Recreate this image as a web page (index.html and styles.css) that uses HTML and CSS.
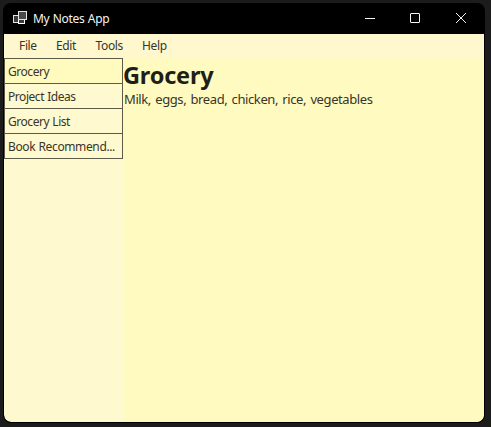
FILE: index.html
```html
<!DOCTYPE html>
<html lang="en">
<head>
<meta charset="utf-8">
<title>My Notes App</title>
<link rel="stylesheet" href="styles.css">
</head>
<body>
<main class="window">
  <header class="titlebar">
    <svg class="app-icon" width="16" height="17" viewBox="0 0 16 17">
      <rect x="1.5" y="5.5" width="6" height="7" fill="#3a3a3a" stroke="#e4e4e4"/>
      <rect x="6.5" y="9.5" width="6" height="4" fill="#3a3a3a" stroke="#fff"/>
      <rect x="6.5" y="1.5" width="8" height="8" fill="#484848" stroke="#e4e4e4"/>
    </svg>
    <h1 class="title">My Notes App</h1>
    <div class="controls">
      <button class="control" aria-label="Minimize"><svg width="13" height="13"><path d="M1 6.5H11"/></svg></button>
      <button class="control" aria-label="Maximize"><svg width="13" height="13"><rect x="1.5" y="1.5" width="9" height="9" rx=".5"/></svg></button>
      <button class="control close" aria-label="Close"><svg width="12" height="13"><path d="M1 1L11 11M11 1L1 11"/></svg></button>
    </div>
  </header>
  <nav class="menu"><span class="file">File</span><span class="edit">Edit</span><span class="tools">Tools</span><span>Help</span></nav>
  <div class="body">
    <ul class="notes">
      <li class="note selected">Grocery</li>
      <li class="note">Project Ideas</li>
      <li class="note">Grocery List</li>
      <li class="note long">Book Recommend...</li>
    </ul>
    <article class="content">
      <h2 class="heading">Grocery</h2>
      <p class="text">Milk, eggs, bread, chicken, rice, vegetables</p>
    </article>
  </div>
</main>
</body>
</html>
```
FILE: styles.css
```css
* { box-sizing: border-box; }
body {
  margin: 0;
  height: 427px;
  padding: 3px 6px 4px 3px;
  overflow: hidden;
  background: #1c1c1c;
  font: 12px/16px "Noto Sans", "Open Sans", sans-serif;
  color: #38352a;
}
.window {
  height: 420px;
  display: flex;
  flex-direction: column;
  background: #000;
  border: solid #000;
  border-width: 0 1px 1px;
  border-radius: 8px;
  overflow: hidden;
}
.titlebar {
  height: 31px;
  flex: none;
  display: flex;
  align-items: center;
  padding-left: 8px;
  color: #f4f4f4;
}
.app-icon { flex: none; }
.title {
  margin: 0 auto 0 5px;
  font-size: 12px;
  font-weight: 400;
  letter-spacing: -.3px;
  word-spacing: .5px;
  white-space: nowrap;
}
.controls { display: flex; }
.control {
  width: 45px;
  height: 31px;
  padding: 0;
  border: 0;
  background: none;
  display: flex;
  align-items: center;
  justify-content: center;
}
.close { width: 46px; }
.control svg { fill: none; stroke: #f4f4f4; }
.menu {
  height: 24px;
  flex: none;
  display: flex;
  align-items: center;
  padding-left: 15px;
  background: #fff8cf;
  letter-spacing: -.35px;
}
.menu span { white-space: nowrap; }
.file { width: 37px; }
.edit { width: 39.5px; }
.tools { width: 46.5px; }
.body { flex: 1; display: flex; background: #fff9cf; border-radius: 0 0 7px 7px; overflow: hidden; }
.notes { width: 119px; flex: none; margin: 0; padding: 0; list-style: none; }
.note {
  height: 25px;
  padding: 0 3px;
  border: 1px solid #5e5a48;
  border-bottom: 0;
  line-height: 25px;
  letter-spacing: -.45px;
  word-spacing: .5px;
  white-space: nowrap;
}
.note:last-child { height: 26px; border-bottom: 1px solid #5e5a48; }
.long { letter-spacing: -.37px; }
.selected { background: #fffabe; }
.content { flex: 1; background: #fffabf; }
.heading {
  margin: 0;
  height: 33px;
  font-size: 23.5px;
  line-height: 34px;
  font-weight: 700;
  letter-spacing: -.2px;
  color: #1f1f16;
}
.text {
  margin: 0;
  padding-left: 1px;
  font-size: 13px;
  letter-spacing: -.4px;
  word-spacing: 1.3px;
  white-space: nowrap;
}
```
